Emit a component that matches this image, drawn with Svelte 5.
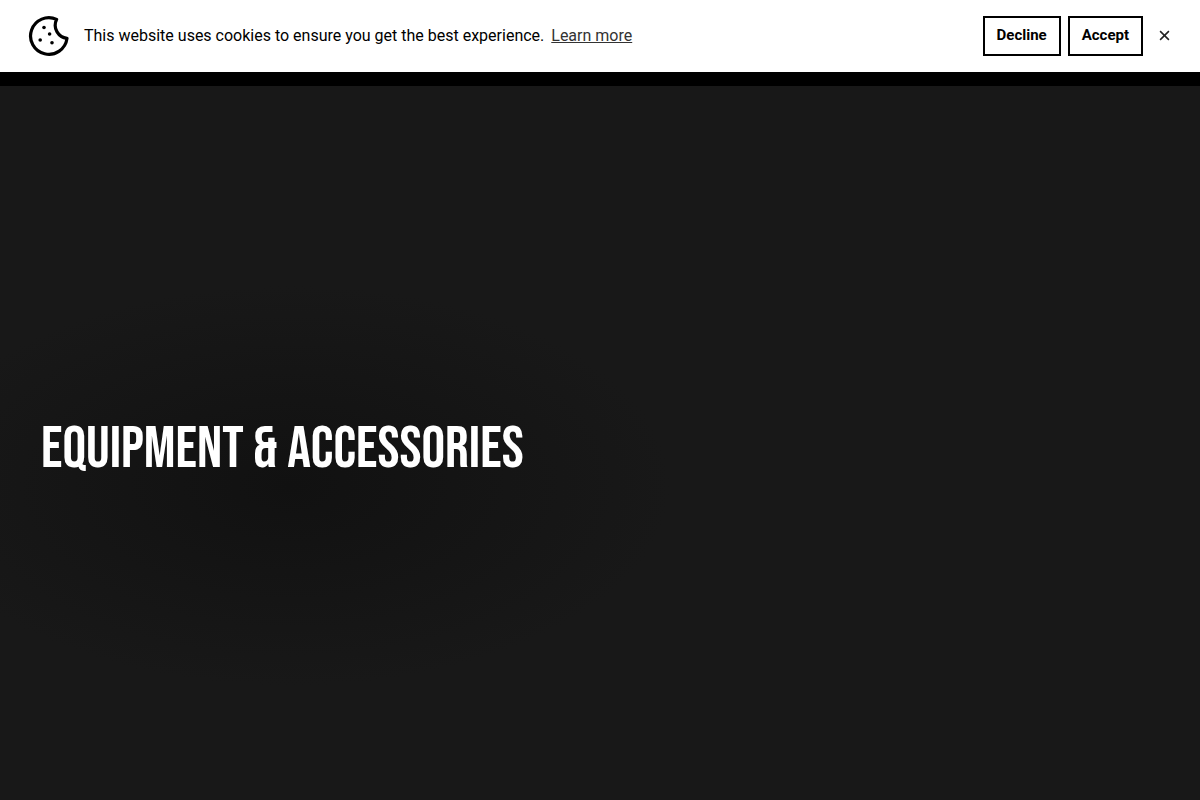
<script lang="ts">
	let showBanner = $state(true);

	function dismiss() {
		showBanner = false;
	}
</script>

<div class="page">
	{#if showBanner}
		<div class="cookie-bar" role="region" aria-label="Cookie consent">
			<svg class="cookie-icon" viewBox="0 0 40 40" aria-hidden="true">
				<path
					d="M27.6 3.4A18.3 18.3 0 1 0 38 22.4C29.5 21.4 23.4 12.4 27.6 3.4Z"
					fill="none"
					stroke="#000"
					stroke-width="3.2"
					stroke-linejoin="round"
				/>
				<circle cx="15" cy="11.5" r="1.8" />
				<circle cx="20.6" cy="18" r="1.8" />
				<circle cx="11.2" cy="24" r="1.8" />
				<circle cx="23" cy="26.8" r="1.8" />
			</svg>
			<p class="message">
				This website uses cookies to ensure you get the best experience.
				<a class="learn-more" href="#cookies">Learn more</a>
			</p>
			<div class="actions">
				<button class="choice" type="button" onclick={dismiss}>Decline</button>
				<button class="choice" type="button" onclick={dismiss}>Accept</button>
				<button class="close" type="button" onclick={dismiss} aria-label="Close">
					<svg viewBox="0 0 10 10" aria-hidden="true">
						<path d="M1 1L9 9M9 1L1 9" stroke="#222" stroke-width="1.4" />
					</svg>
				</button>
			</div>
		</div>
	{/if}

	<header class="topbar"></header>

	<main class="hero">
		<h1>Equipment &amp; Accessories</h1>
	</main>
</div>

<style>
	:global(body) {
		margin: 0;
		background: #181818;
	}

	.page {
		display: flex;
		flex-direction: column;
		min-height: 100vh;
		font-family: Roboto, 'Liberation Sans', sans-serif;
	}

	.cookie-bar {
		display: flex;
		align-items: center;
		padding: 16px 22px 16px 28px;
		background: #fff;
		color: #000;
	}

	.cookie-icon {
		flex: none;
		width: 42px;
		height: 40px;
	}

	.message {
		flex: 1;
		margin: 0 14px;
		font-size: 16px;
		line-height: 24px;
	}

	.learn-more {
		margin-left: 3px;
		color: #333;
		text-decoration: underline;
	}

	.actions {
		display: flex;
		align-items: center;
		gap: 7px;
	}

	.choice {
		height: 40px;
		padding: 0 12px 2px;
		border: 2px solid #000;
		background: #fff;
		color: #000;
		font: 700 15px/20px Roboto, 'Liberation Sans', sans-serif;
		cursor: pointer;
	}

	.close {
		display: flex;
		align-items: center;
		justify-content: center;
		width: 28px;
		height: 28px;
		padding: 0 0 2px;
		border: none;
		background: none;
		cursor: pointer;
	}

	.close svg {
		width: 11px;
		height: 11px;
	}

	.topbar {
		height: 14px;
		background: #000;
	}

	.hero {
		display: flex;
		flex: 1;
		align-items: center;
		padding: 14px 41px 0;
		background: radial-gradient(380px 200px at 290px 56%, #111, #181818) #181818;
	}

	h1 {
		margin: 0;
		color: #fff;
		font: 400 59px/64px 'Bebas Neue', 'Liberation Sans Narrow', Roboto, sans-serif;
		text-transform: uppercase;
	}
</style>
